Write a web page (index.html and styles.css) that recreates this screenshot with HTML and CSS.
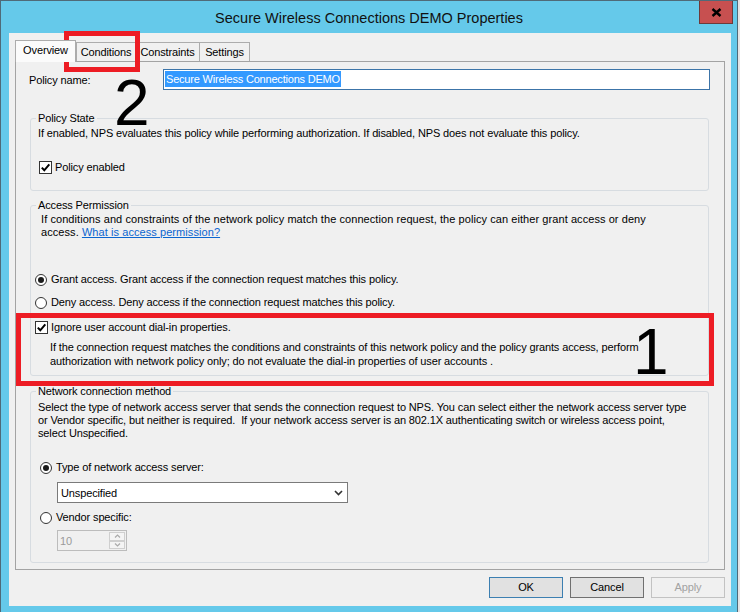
FILE: index.html
```html
<!DOCTYPE html>
<html>
<head>
<meta charset="utf-8">
<title>Secure Wireless Connections DEMO Properties</title>
<link rel="stylesheet" href="styles.css">
</head>
<body>
<div class="window">
  <div class="titlebar">
    <span class="tb-left"></span>
    <div class="title">Secure Wireless Connections DEMO Properties</div>
    <div class="close"><svg width="11" height="9" viewBox="0 0 11 9"><path d="M1.5 1 L9.5 8 M9.5 1 L1.5 8" stroke="#000" stroke-width="2.4" fill="none"/></svg></div>
  </div>
  <div class="client">
    <div class="tabs">
      <div class="tab sel w-over">Overview</div>
      <div class="tab w-cond">Conditions</div>
      <div class="tab w-cons">Constraints</div>
      <div class="tab w-set">Settings</div>
    </div>
    <div class="panel">
      <div class="name-row">
        <span class="name-label">Policy name:</span>
        <div class="textbox"><span class="seltext">Secure Wireless Connections DEMO</span></div>
      </div>

      <fieldset class="grp g-state">
        <legend>Policy State</legend>
        <div class="p-desc">If enabled, NPS evaluates this policy while performing authorization. If disabled, NPS does not evaluate this policy.</div>
        <div class="opt opt-enabled"><span class="chk"><svg width="11" height="11" viewBox="0 0 11 11"><path d="M1.8 5.6 L4.3 8.3 L9.3 2.3" stroke="#000" stroke-width="2" fill="none"/></svg></span><span>Policy enabled</span></div>
      </fieldset>

      <fieldset class="grp g-access">
        <legend>Access Permission</legend>
        <div class="a-desc">If conditions and constraints of the network policy match the connection request, the policy can either grant access or deny<br>access. <span class="link">What is access permission?</span></div>
        <div class="opt opt-grant"><span class="radio on"></span><span>Grant access. Grant access if the connection request matches this policy.</span></div>
        <div class="opt opt-deny"><span class="radio"></span><span>Deny access. Deny access if the connection request matches this policy.</span></div>
        <div class="opt opt-ignore"><span class="chk"><svg width="11" height="11" viewBox="0 0 11 11"><path d="M1.8 5.6 L4.3 8.3 L9.3 2.3" stroke="#000" stroke-width="2" fill="none"/></svg></span><span>Ignore user account dial-in properties.</span></div>
        <div class="i-desc">If the connection request matches the conditions and constraints of this network policy and the policy grants access, perform<br>authorization with network policy only; do not evaluate the dial-in properties of user accounts .</div>
      </fieldset>

      <fieldset class="grp g-net">
        <legend>Network connection method</legend>
        <div class="n-desc">Select the type of network access server that sends the connection request to NPS. You can select either the network access server type<br>or Vendor specific, but neither is required.&nbsp; If your network access server is an 802.1X authenticating switch or wireless access point,<br>select Unspecified.</div>
        <div class="opt opt-type"><span class="radio on"></span><span>Type of network access server:</span></div>
        <div class="combo"><span>Unspecified</span><svg width="9" height="6" viewBox="0 0 9 6"><path d="M1 1 L4.5 4.6 L8 1" stroke="#333" stroke-width="1.6" fill="none"/></svg></div>
        <div class="opt opt-vendor"><span class="radio"></span><span>Vendor specific:</span></div>
        <div class="spin">
          <span class="spin-val">10</span>
          <div class="spin-btns">
            <div class="sb"><svg width="7" height="4" viewBox="0 0 7 4"><path d="M1 3.5 L3.5 1 L6 3.5" stroke="#aaa" stroke-width="1.2" fill="none"/></svg></div>
            <div class="sb"><svg width="7" height="4" viewBox="0 0 7 4"><path d="M1 0.5 L3.5 3 L6 0.5" stroke="#aaa" stroke-width="1.2" fill="none"/></svg></div>
          </div>
        </div>
      </fieldset>
    </div>
    <div class="buttons">
      <div class="btn btn-ok">OK</div>
      <div class="btn btn-cancel">Cancel</div>
      <div class="btn btn-apply">Apply</div>
    </div>
  </div>

  <div class="mark mark-tab"></div>
  <div class="mark mark-ignore"></div>
  <div class="digit digit-2">2</div>
  <div class="digit digit-1">1</div>
</div>
</body>
</html>
```

FILE: styles.css
```css
html, body {
  margin: 0;
  padding: 0;
}
body {
  width: 740px;
  height: 612px;
  overflow: hidden;
  background: #e4e4e4;
  font-family: "Liberation Sans", Arial, sans-serif;
  font-size: 11px;
  letter-spacing: -0.13px;
  color: #000;
}

.window {
  position: relative;
  box-sizing: border-box;
  width: 738px;
  height: 612px;
  border: 1px solid #4f6a78;
  border-bottom: none;
  background: #65c9ea;
  padding: 0 6px 0 8px;
}

.titlebar {
  height: 32px;
  margin: 0 -6px 0 -8px;
  display: grid;
  grid-template-columns: 1fr auto 1fr;
  align-items: start;
}
.title {
  font-family: "Liberation Sans", Arial, sans-serif;
  font-size: 14.5px;
  letter-spacing: 0;
  line-height: 18px;
  padding-top: 8px;
  color: #111;
  white-space: nowrap;
}
.close {
  justify-self: end;
  margin-right: 4px;
  box-sizing: border-box;
  width: 34px;
  height: 23px;
  background: #c75050;
  border: 1px solid #6d3a3a;
  border-top: none;
  display: flex;
  align-items: center;
  justify-content: center;
}

.client {
  box-sizing: border-box;
  height: 573px;
  background: #f0f0f0;
  padding: 7px 6px 0 6px;
}

.tabs {
  display: flex;
  align-items: flex-end;
  height: 21px;
}
.tab {
  box-sizing: border-box;
  height: 19px;
  border: 1px solid #acacac;
  border-bottom: none;
  background: #f0f0f0;
  text-align: center;
  line-height: 18px;
  white-space: nowrap;
}
.tab.sel {
  position: relative;
  z-index: 1;
  height: 22px;
  margin-bottom: -1px;
  background: #fbfbfb;
  line-height: 18px;
}
.w-over { width: 61px; }
.w-cond { width: 60px; }
.w-cons { width: 65px; margin-left: -1px; }
.w-set { width: 51px; margin-left: -1px; }

.panel {
  box-sizing: border-box;
  height: 509px;
  border: 1px solid #a3a3a3;
  background: #f0f0f0;
  padding: 0 15px 0 14px;
}

.name-row {
  display: flex;
  align-items: center;
  margin-top: 7px;
  height: 21px;
}
.name-label {
  width: 134px;
  margin-left: -1px;
}
.textbox {
  flex: 1;
  box-sizing: border-box;
  height: 21px;
  margin-right: -1px;
  border: 1px solid #3c74a8;
  background: #fff;
  padding: 1px 0 0 1px;
}
.seltext {
  display: inline-block;
  background: #3399ff;
  color: #fff;
  line-height: 16px;
  padding: 0 1px;
  letter-spacing: -0.2px;
}

.grp {
  margin: 0;
  border: 1px solid #d7dce1;
  border-radius: 3px;
  padding: 0 6px 0 7px;
  min-width: 0;
}
.grp legend {
  padding: 0 2px;
  margin-left: -2px;
  line-height: 14px;
}
.g-state { margin-top: 21px; padding-bottom: 16px; }
.g-access { margin-top: 7px; padding-bottom: 7px; }
.g-net { margin-top: 8px; padding-bottom: 11px; }

.p-desc { line-height: 13px; margin-top: 2px; white-space: nowrap; }
.a-desc { line-height: 13px; margin-top: 1px; margin-left: 3px; white-space: nowrap; letter-spacing: 0.07px; }
.i-desc { line-height: 14px; margin-top: 6px; margin-left: 12px; white-space: nowrap; }
.n-desc { line-height: 13px; margin-top: 3px; white-space: nowrap; }

.link {
  color: #0b66d0;
  text-decoration: underline;
}

.opt {
  display: flex;
  align-items: center;
  height: 13px;
  line-height: 13px;
  white-space: nowrap;
}
.opt-enabled { margin-top: 21px; margin-left: 1px; gap: 3px; }
.opt-grant { margin-top: 34px; margin-left: -3px; gap: 4px; }
.opt-deny { margin-top: 10px; margin-left: -3px; gap: 4px; }
.opt-ignore { margin-top: 12px; margin-left: -3px; gap: 3px; }
.opt-type { margin-top: 21px; margin-left: 2px; gap: 4px; }
.opt-vendor { margin-top: 8px; margin-left: 2px; gap: 4px; }

.chk {
  box-sizing: border-box;
  width: 13px;
  height: 13px;
  border: 1px solid #333;
  background: #fff;
  display: flex;
  align-items: center;
  justify-content: center;
  flex: none;
}
.radio {
  box-sizing: border-box;
  width: 12px;
  height: 12px;
  border: 1px solid #333;
  border-radius: 50%;
  background: #fff;
  display: flex;
  align-items: center;
  justify-content: center;
  flex: none;
}
.radio.on::after {
  content: "";
  width: 6px;
  height: 6px;
  border-radius: 50%;
  background: #1a1a1a;
}

.combo {
  box-sizing: border-box;
  width: 291px;
  height: 21px;
  margin-top: 8px;
  margin-left: 19px;
  border: 1px solid #7a7a7a;
  background: #fff;
  display: flex;
  align-items: center;
  justify-content: space-between;
  padding: 0 4px 0 3px;
}

.spin {
  box-sizing: border-box;
  width: 70px;
  height: 21px;
  margin-top: 6px;
  margin-left: 19px;
  border: 1px solid #bcbcbc;
  background: #f0f0f0;
  display: flex;
  align-items: center;
  justify-content: space-between;
  padding-left: 2px;
}
.spin-val { color: #9a9a9a; }
.spin-btns {
  align-self: stretch;
  display: flex;
  flex-direction: column;
  width: 16px;
  padding: 1px 1px 1px 0;
  gap: 0;
}
.sb {
  flex: 1;
  box-sizing: border-box;
  border: 1px solid #cfcfcf;
  background: #f4f4f4;
  display: flex;
  align-items: center;
  justify-content: center;
}

.buttons {
  display: flex;
  justify-content: flex-end;
  gap: 7px;
  margin-top: 7px;
}
.btn {
  box-sizing: border-box;
  width: 74px;
  height: 21px;
  line-height: 19px;
  text-align: center;
  background: #e1e1e1;
  border: 1px solid #adadad;
}
.btn-ok { border-color: #3c7fb1; }
.btn-cancel { border-color: #707070; }
.btn-apply { background: #f0f0f0; border-color: #c2c2c2; color: #a2a2a2; }

/* annotation overlays */
.mark {
  position: absolute;
  box-sizing: border-box;
  border: 5px solid #ed1c24;
}
.mark-tab { left: 63px; top: 30px; width: 76px; height: 41px; }
.mark-ignore { left: 15px; top: 312px; width: 698px; height: 73px; }

.digit {
  position: absolute;
  font-family: "Liberation Sans", Arial, sans-serif;
  line-height: 40px;
  height: 40px;
  letter-spacing: 0;
  color: #000;
}
.digit-2 { left: 113px; top: 82px; font-size: 64px; }
.digit-1 { left: 632px; top: 331px; font-size: 64px; }
```
